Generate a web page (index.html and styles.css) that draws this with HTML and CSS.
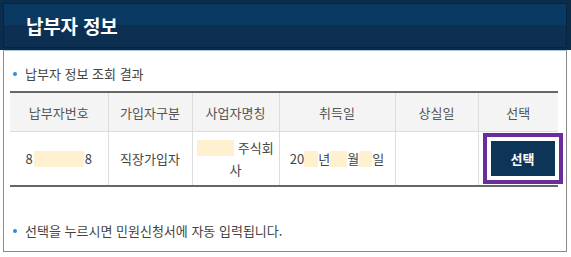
FILE: index.html
```html
<!DOCTYPE html>
<html lang="ko">
<head>
  <meta charset="UTF-8">
  <meta name="viewport" content="width=device-width, initial-scale=1.0">
  <title>납부자 정보</title>
  <link rel="stylesheet" href="styles.css">
</head>
<body>
  <div class="popup">
    <div class="popup-head">
      <h1 class="popup-title">납부자 정보</h1>
    </div>
    <div class="popup-body">
      <p class="bullet">납부자 정보 조회 결과</p>
      <table class="result">
        <colgroup>
          <col style="width: 98px">
          <col style="width: 84px">
          <col style="width: 87px">
          <col style="width: 116px">
          <col style="width: 83px">
          <col style="width: 80px">
        </colgroup>
        <thead>
          <tr>
            <th>납부자번호</th>
            <th>가입자구분</th>
            <th>사업자명칭</th>
            <th>취득일</th>
            <th>상실일</th>
            <th>선택</th>
          </tr>
        </thead>
        <tbody>
          <tr>
            <td>8<span class="mask mask-num"></span>8</td>
            <td>직장가입자</td>
            <td class="name"><span class="mask mask-name"></span> 주식회사</td>
            <td>20<span class="mask mask-yy"></span>년<span class="mask mask-mm"></span>월<span class="mask mask-dd"></span>일</td>
            <td></td>
            <td><span class="mark"><button class="btn-select">선택</button></span></td>
          </tr>
        </tbody>
      </table>
      <p class="bullet note">선택을 누르시면 민원신청서에 자동 입력됩니다.</p>
    </div>
  </div>
</body>
</html>
```

FILE: styles.css
```css
html, body {
  margin: 0;
  padding: 0;
  background: #fff;
}

body {
  font-family: "Noto Sans CJK KR", "Noto Sans", sans-serif;
  font-size: 13px;
  color: #444;
  width: 571px;
  height: 257px;
  overflow: hidden;
}

.popup-head {
  height: 45px;
  background: linear-gradient(#0a3a61 0, #0a3a61 50%, #0d2f51 50%, #0d2f51 100%);
  border: 3px solid #0b2c4b;
  border-bottom: 2px solid #0b2c4b;
  border-right-width: 4px;
  box-shadow: inset 0 0 0 1px #082440;
  display: flex;
  align-items: center;
}

.popup-title {
  margin: 0 0 0 23px;
  font-size: 19px;
  font-weight: bold;
  color: #fff;
  letter-spacing: -0.2px;
}

.popup-body {
  margin: 0 4px 0 3px;
  height: 200px;
  border: 1px solid #8a8a8a;
  border-top: 1px solid #a9c6df;
  padding: 0 8px 0 6px;
}

.bullet {
  position: relative;
  margin: 0;
  padding-left: 15px;
  line-height: 18px;
  color: #444;
}

.bullet::before {
  content: "";
  position: absolute;
  left: 3px;
  top: 7px;
  width: 4px;
  height: 4px;
  border-radius: 50%;
  background: #2b8fdc;
}

.popup-body > .bullet:first-child {
  padding-top: 14px;
}

.popup-body > .bullet:first-child::before {
  top: 21px;
}

.result {
  margin-top: 8px;
  width: 548px;
  border-collapse: collapse;
  table-layout: fixed;
  border-top: 2px solid #666;
  border-bottom: 2px solid #666;
}

.result th,
.result td {
  border-left: 1px solid #ddd;
  text-align: center;
  font-weight: normal;
  padding: 0 4px;
}

.result th:first-child,
.result td:first-child {
  border-left: none;
}

.result th {
  height: 38px;
  background: #f4f4f4;
  color: #555;
  border-bottom: 1px solid #ddd;
}

.result td {
  height: 53px;
  color: #444;
  line-height: 22px;
}

.mask {
  display: inline-block;
  height: 16px;
  vertical-align: -3px;
  background: #fff0cf;
}

.mask-num { width: 50px; margin: 0 1px; }
.mask-name { width: 37px; }
.mask-yy { width: 14px; }
.mask-mm { width: 17px; }
.mask-dd { width: 13px; }

.mark {
  display: inline-block;
  border: 4px solid #6a2d9b;
  padding: 4px;
  vertical-align: middle;
}

.btn-select {
  display: block;
  width: 64px;
  height: 35px;
  border: none;
  background: #0d3558;
  color: #fff;
  font-family: inherit;
  font-size: 13px;
  font-weight: bold;
  cursor: pointer;
}

.note {
  margin-top: 35px;
}
```
